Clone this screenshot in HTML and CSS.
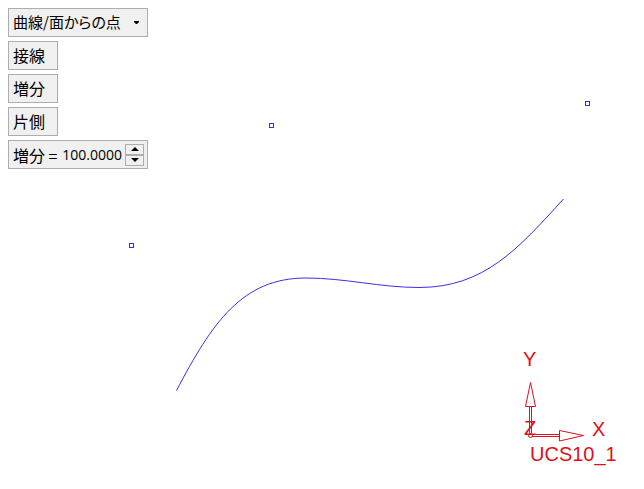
FILE: index.html
```html
<!DOCTYPE html>
<html lang="ja">
<head>
<meta charset="utf-8">
<title>曲線/面からの点</title>
<link rel="stylesheet" href="styles.css">
</head>
<body>
<main class="viewport">
  <svg class="scene" viewBox="0 0 644 489" aria-hidden="true">
    <path class="curve" d="M176.5 390.5C212 323 242 278 306 278C345 278 380 287.500 419 287.500C484 287.500 518 249 563.500 199"/>
    <g class="points">
      <rect x="129.500" y="243.500" width="4" height="4"/>
      <rect x="269.500" y="123.500" width="4" height="4"/>
      <rect x="585.500" y="101.500" width="4" height="4"/>
    </g>
    <g class="axes">
      <path d="M529.500 434V406.500M531.500 433V406.500M525.500 406.500L530.500 382.500L535.500 406.500Z"/>
      <path d="M532 434.500H559.500M532 436.500H559.500M559.500 430.500L583.500 435.500L559.500 441Z"/>
      <circle cx="530.500" cy="435.500" r="2"/>
    </g>
    <g class="axis-names">
      <text x="523" y="366">Y</text>
      <text x="592" y="436">X</text>
      <text x="524" y="435">Z</text>
      <text x="530" y="461">UCS10_1</text>
    </g>
  </svg>
  <form class="toolbar">
    <div class="picker">
      <select class="box picker-select" aria-label="点の作成方法">
        <option>曲線/面からの点</option>
      </select>
      <svg class="picker-arrow" viewBox="0 0 5 3" aria-hidden="true"><path d="M0 0H5V1L3 3H2L0 1Z"/></svg>
    </div>
    <button class="box" type="button">接線</button>
    <button class="box" type="button">増分</button>
    <button class="box" type="button">片側</button>
    <div class="box stepper">
      <label for="step">増分 =</label>
      <input id="step" type="text" inputmode="decimal" value="100.0000">
      <div class="arrows">
        <button type="button" aria-label="増やす"><svg viewBox="0 0 8 4"><path d="M4 0L8 4H0Z"/></svg></button>
        <button type="button" aria-label="減らす"><svg viewBox="0 0 8 4"><path d="M0 0H8L4 4Z"/></svg></button>
      </div>
    </div>
  </form>
</main>
</body>
</html>
```

FILE: styles.css
```css
* {
  box-sizing: border-box;
}

body {
  margin: 0;
  background: #fff;
  color: #000;
  font-family: "Noto Sans CJK JP", sans-serif;
  font-size: 16px;
  line-height: 24px;
}

.viewport {
  display: grid;
  min-height: 100vh;
}

.scene,
.toolbar {
  grid-area: 1 / 1;
}

.scene {
  display: block;
  width: 100%;
}

.curve,
.points,
.axes {
  fill: none;
  stroke-width: 1;
}

.curve,
.points {
  stroke: #3a2ee0;
}

.axes {
  stroke: #e00f18;
}

.axis-names {
  fill: #e00f18;
  font-family: "Liberation Sans", sans-serif;
  font-size: 20px;
}

.toolbar {
  display: flex;
  flex-direction: column;
  align-items: flex-start;
  gap: 4px;
  padding: 8px;
  z-index: 1;
}

.box {
  height: 29px;
  margin: 0;
  padding: 0 4px 2px;
  border: 1px solid #adadad;
  border-radius: 0;
  background: #f0f0f0;
  color: inherit;
  font: inherit;
}

button.box {
  min-width: 50px;
  text-align: left;
}

.picker {
  position: relative;
}

.picker-select {
  display: block;
  width: 140px;
  appearance: none;
  font-size: 15px;
  font-feature-settings: "palt";
}

.picker-arrow {
  position: absolute;
  top: 13px;
  right: 9px;
  width: 5px;
  height: 3px;
  pointer-events: none;
}

.stepper {
  display: flex;
  align-items: center;
  width: 140px;
  gap: 3px;
  padding: 0 3px 0 4px;
}

.stepper label {
  flex: none;
  white-space: nowrap;
}

.stepper input {
  flex: 1;
  min-width: 0;
  height: 24px;
  padding: 0;
  border: 0;
  background: none;
  color: inherit;
  font-family: "Open Sans", sans-serif;
  font-size: 14px;
  text-align: right;
}

.arrows {
  display: grid;
  flex: none;
  width: 19px;
}

.arrows button {
  display: grid;
  place-items: center;
  height: 11px;
  padding: 0;
  border: 1px solid #adadad;
  border-radius: 0;
  background: #f0f0f0;
}

.arrows svg {
  width: 8px;
  height: 4px;
}
```
